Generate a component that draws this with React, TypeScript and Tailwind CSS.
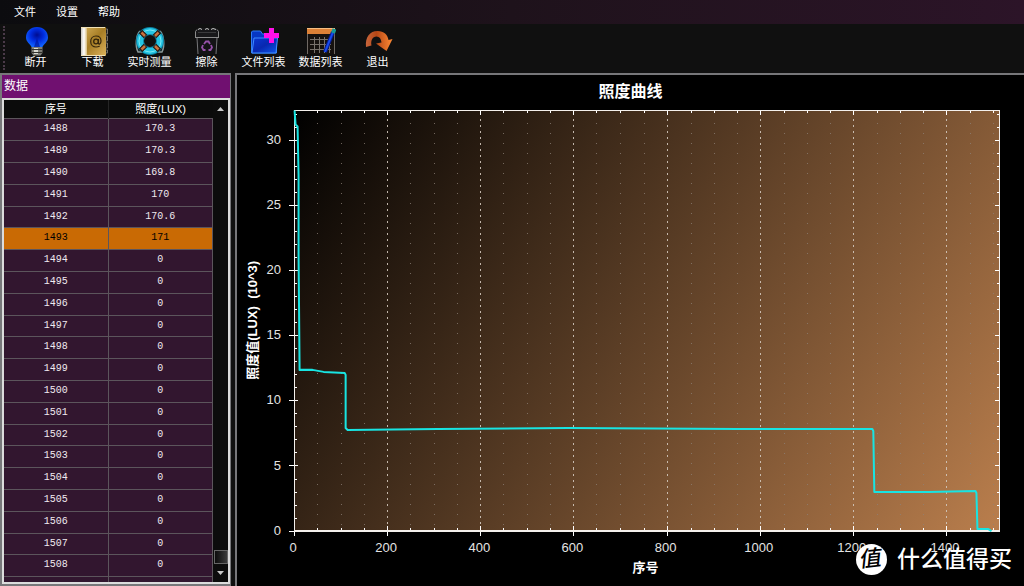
import React from 'react';

const menus = ['文件', '设置', '帮助'];

const rows: [number, string][] = [
  [1488, '170.3'],
  [1489, '170.3'],
  [1490, '169.8'],
  [1491, '170'],
  [1492, '170.6'],
  [1493, '171'],
  ...Array.from({ length: 15 }, (_, i): [number, string] => [1494 + i, '0']),
];

function BulbIcon() {
  return (
    <svg width="30" height="30" viewBox="0 0 30 30" aria-hidden="true">
      <defs>
        <radialGradient id="bulb" cx="0.5" cy="0.4" r="0.6">
          <stop offset="0" stopColor="#000c90" />
          <stop offset="0.5" stopColor="#002ce0" />
          <stop offset="1" stopColor="#1266ff" />
        </radialGradient>
      </defs>
      <path d="M16 1C9.500 1 5 5.500 5 11.500c0 4.500 4 6 5.500 9.500h11c1.500-3.500 5.500-5 5.500-9.500C27 5.500 22.500 1 16 1z" fill="url(#bulb)" />
      <path d="M16 12l-3 9h6z" fill="#0018a0" opacity="0.7" />
      <path d="M10.500 21h11v6l-2 2.500h-7l-2-2.500z" fill="#7d7d76" />
      <path d="M13 22h4v6h-4z" fill="#d9d9d0" />
      <path d="M10.500 23.500h11M10.500 26.500h11" stroke="#33332e" />
    </svg>
  );
}

function BookIcon() {
  return (
    <svg width="30" height="30" viewBox="0 0 30 30" aria-hidden="true">
      <defs>
        <linearGradient id="cover" x1="0" x2="1" y1="0" y2="1">
          <stop offset="0" stopColor="#d7b25c" />
          <stop offset="0.5" stopColor="#a67d25" />
          <stop offset="1" stopColor="#dfb55e" />
        </linearGradient>
        <linearGradient id="spine">
          <stop offset="0" stopColor="#c9c5bb" />
          <stop offset="0.5" stopColor="#ffffff" />
          <stop offset="1" stopColor="#d8bd7e" />
        </linearGradient>
      </defs>
      <path d="M28 3h1.500v5H28M28 10h1.500v5H28M28 17h1.500v5H28M28 24h1.500v3H28" fill="#222" stroke="#77736a" />
      <rect x="3" y="1" width="25" height="29" rx="1" fill="url(#cover)" />
      <path d="M3 1h6v29H3z" fill="url(#spine)" />
      <path d="M3 1.500h24M3 29.500h24" stroke="#f1e1b5" />
      <circle cx="18" cy="15.500" r="2.300" fill="none" stroke="#35260c" strokeWidth="1.300" />
      <path d="M20.500 13v4c0 2 2.500 1 2.500-2 0-3.500-2.500-5-5-5-3.200 0-5.300 2.500-5.300 5.500 0 3.500 2.500 5.500 5.300 5.500 1.500 0 2.700-.4 3.700-1" fill="none" stroke="#35260c" strokeWidth="1.200" />
    </svg>
  );
}

function LifebuoyIcon() {
  return (
    <svg width="32" height="30" viewBox="0 0 32 30" aria-hidden="true">
      <path d="M6 5C2 9 1 20 4 26h4M26 5c4 4 5 15 2 21h-4" fill="none" stroke="#8a9a9a" strokeWidth="1.500" />
      <circle cx="16" cy="15" r="10" fill="none" stroke="#0b7fa0" strokeWidth="8" />
      <circle cx="16" cy="15" r="10" fill="none" stroke="#25c5e3" strokeWidth="6" />
      <circle cx="16" cy="15" r="11" fill="none" stroke="#7ae8f4" strokeWidth="1" />
      <g stroke="#2a1a12" strokeWidth="5">
        <path d="M6.500 5.500l5 5M20.500 19.500l5 5M25.500 5.500l-5 5M11.500 19.500l-5 5" />
      </g>
      <g stroke="#c8703c" strokeWidth="2.500">
        <path d="M7.500 6.500l3.500 3.500M21 20l3.500 3.500M24.500 6.500L21 10M11 20l-3.500 3.500" />
      </g>
    </svg>
  );
}

function TrashIcon() {
  return (
    <svg width="28" height="30" viewBox="0 0 28 30" aria-hidden="true">
      <path d="M4 12h20l-1 16H5z" fill="#131315" />
      <path d="M4 12l1 16M24 12l-1 16" stroke="#77777a" strokeWidth="1" />
      <path d="M2 11V5l3-3h18l3 3v6z" fill="#18181a" />
      <path d="M2 11.500h24M2.500 11V5.500L4 3.500M25.500 11V5.500L24 3.500" fill="none" stroke="#8b8b8b" />
      <path d="M5 3.500l2-1 2 1M12 3.500l2-1 2 1M18 3.500l2-1 3 1" fill="none" stroke="#c4c4c4" />
      <path d="M5 6.500h18" stroke="#3a3a3c" />
      <g fill="none" stroke="#9551a8" strokeWidth="1.800">
        <path d="M11 18l2-2.500h2.500L17 18M18 19l1 2.500-1.500 2.500h-2M12.500 24h-2L9 21.500 10 19" />
      </g>
    </svg>
  );
}

function FolderIcon() {
  return (
    <svg width="30" height="30" viewBox="0 0 30 30" aria-hidden="true">
      <defs>
        <linearGradient id="folder" x1="0" x2="1" y1="0" y2="1">
          <stop offset="0" stopColor="#0a38d4" />
          <stop offset="0.5" stopColor="#0828b0" />
          <stop offset="1" stopColor="#0d57ec" />
        </linearGradient>
      </defs>
      <path d="M2.500 6l1-1h8l2 3h14v19h-25z" fill="#0737c4" stroke="#2f7df5" />
      <path d="M5 12h23.500L27 27H3z" fill="url(#folder)" stroke="#3f8cff" />
      <path d="M20 2h5v5h5v5h-5v5h-5v-5h-5V7h5z" fill="#ff10e8" />
    </svg>
  );
}

function SheetIcon() {
  return (
    <svg width="30" height="30" viewBox="0 0 30 30" aria-hidden="true">
      <path d="M1 2h28v26H1z" fill="#16120f" />
      <path d="M1.500 2v26M28.500 2v26" stroke="#6f6964" />
      <path d="M1 2h28v6H1z" fill="#dc8137" />
      <path d="M1 2.500h28" stroke="#f6bd82" />
      <path d="M4 13.500h21M4 18.500h21M4 23.500h21M8.500 11v16M13.500 11v16M18.500 11v16M23.500 11v16" stroke="#77716b" />
      <path d="M27 6l-8 20" stroke="#071c91" strokeWidth="4" />
      <path d="M27 6l-8 20" stroke="#174df0" strokeWidth="2" />
      <path d="M28.500 3l-1.500 4" stroke="#169996" strokeWidth="4" />
    </svg>
  );
}

function ExitIcon() {
  return (
    <svg width="30" height="30" viewBox="0 0 30 30" aria-hidden="true">
      <defs>
        <linearGradient id="exit">
          <stop offset="0" stopColor="#c8663c" />
          <stop offset="0.4" stopColor="#b64716" />
          <stop offset="1" stopColor="#ff8b35" />
        </linearGradient>
      </defs>
      <path d="M3 21C2 11 7 5 14.500 5c6.500 0 10 3.500 11 9l4-1-6 12-10.500-7.500 5.500-1c-.5-4-2-6-5-6-4 0-6 4-5 9z" fill="url(#exit)" />
    </svg>
  );
}

const tools = [
  { label: '断开', icon: <BulbIcon /> },
  { label: '下载', icon: <BookIcon /> },
  { label: '实时测量', icon: <LifebuoyIcon /> },
  { label: '擦除', icon: <TrashIcon /> },
  { label: '文件列表', icon: <FolderIcon /> },
  { label: '数据列表', icon: <SheetIcon /> },
  { label: '退出', icon: <ExitIcon /> },
];

const LEFT = 57;
const TOP = 35;
const RIGHT = 762;
const BOTTOM = 455;
const X_MAX = 1515;
const xAt = (v: number) => Math.round(LEFT + v * 0.4653);
const yAt = (v: number) => Math.round(BOTTOM - v * 13);

const curve: [number, number][] = [
  [57, 35], [58, 49], [60, 51], [61, 100], [61, 180], [62, 294], [75, 294], [86, 296], [107, 297],
  [108, 299], [108, 352], [110, 354], [200, 353], [330, 352], [500, 353], [634, 353], [635, 355],
  [636, 416], [690, 416], [737, 415], [738, 417], [739, 453], [750, 453], [753, 455],
];

function Chart() {
  const xs = Array.from({ length: Math.floor(X_MAX / 50) }, (_, i) => (i + 1) * 50);
  const ys = Array.from({ length: 32 }, (_, i) => i + 1);
  return (
    <svg
      viewBox="0 0 786 509"
      preserveAspectRatio="xMinYMin meet"
      className="block h-full w-full"
      role="img"
      aria-label="照度曲线"
      fontFamily="'Liberation Sans', 'Noto Sans CJK SC', sans-serif"
    >
      <defs>
        <linearGradient id="plot" gradientUnits="userSpaceOnUse" x1="57" y1="35" x2="728" y2="490">
          <stop offset="0" stopColor="#000000" />
          <stop offset="1" stopColor="#b87d4c" />
        </linearGradient>
      </defs>
      <rect x={LEFT} y={TOP} width={RIGHT - LEFT} height={BOTTOM - TOP} fill="url(#plot)" />
      <g shapeRendering="crispEdges" strokeWidth="1">
        {xs.map((v) => {
          const major = v % 200 === 0;
          const x = xAt(v) + 0.5;
          return (
            <g key={v}>
              <path
                d={`M${x} ${major ? TOP + 9 : TOP + 13}V${BOTTOM}`}
                stroke={major ? '#d2c7bb' : '#8d8278'}
                strokeOpacity={major ? 0.9 : 0.75}
                strokeDasharray={major ? '2 4' : '1 9'}
              />
              <path
                d={`M${x} ${TOP}v${major ? 5 : 3}M${x} ${BOTTOM + (major ? 5 : 0)}v${major ? -10 : -3}`}
                stroke="#ffffff"
              />
            </g>
          );
        })}
        {ys.map((v) => {
          const major = v % 5 === 0;
          const y = yAt(v) + 0.5;
          return (
            <path
              key={v}
              d={`M${LEFT - (major ? 5 : 0)} ${y}h${major ? 9 : 3}M${RIGHT} ${y}h${major ? -5 : -3}`}
              stroke="#ffffff"
            />
          );
        })}
        <path d={`M${LEFT - 5} ${BOTTOM + 0.5}h5M${LEFT + 0.5} ${BOTTOM}v5`} stroke="#ffffff" />
      </g>
      <g fill="none" stroke="#f4f0ec" shapeRendering="crispEdges">
        <path d={`M${LEFT + 0.5} ${BOTTOM}V${TOP + 0.5}H${RIGHT}`} />
        <path d={`M${RIGHT - 0.5} ${TOP}V${BOTTOM}`} />
        <path d={`M${LEFT} ${BOTTOM}H${RIGHT}`} strokeWidth="2" />
      </g>
      <path
        d={'M' + curve.map(([x, y]) => `${x + 0.5} ${y + 0.5}`).join('L')}
        fill="none"
        stroke="#18e4e2"
        strokeWidth="2"
        strokeLinejoin="round"
      />
      <g fill="#e4e4e4" fontSize="13">
        {[0, 5, 10, 15, 20, 25, 30].map((v) => (
          <text key={v} x="44" y={yAt(v) + 4} textAnchor="end">{v}</text>
        ))}
        {[0, 200, 400, 600, 800, 1000, 1200, 1400].map((v) => (
          <text key={v} x={xAt(v) - 1} y="476" textAnchor="middle">{v}</text>
        ))}
      </g>
      <g fill="#ffffff" textAnchor="middle" fontWeight="700">
        <text x="393" y="22" fontSize="16">照度曲线</text>
        <text x="408" y="496" fontSize="13">序号</text>
        <text transform="translate(20 245) rotate(-90)" fontSize="13">
          照度值(LUX)&#160;&#160;(10^3)
        </text>
      </g>
    </svg>
  );
}

function Watermark() {
  return (
    <div className="absolute right-3 bottom-[11px] flex items-center gap-[10px] text-white">
      <span className="flex size-[31px] items-center justify-center rounded-full bg-white text-[22px] leading-none font-medium text-black">
        <span className="-skew-x-6 -skew-y-6">值</span>
      </span>
      <span className="text-[23px] leading-8 font-medium">什么值得买</span>
    </div>
  );
}

export default function App() {
  return (
    <div className="flex h-screen flex-col overflow-hidden bg-[#101010] font-['Liberation_Sans','Noto_Sans_CJK_SC',sans-serif] text-white">
      <nav className="flex h-6 shrink-0 items-center gap-5 bg-linear-to-r from-[#0c0c0f] via-[#1e121b] to-[#2c1428] px-3.5 text-[11px]">
        {menus.map((m) => (
          <button key={m} type="button" className="leading-6">{m}</button>
        ))}
      </nav>
      <div className="flex h-[49px] shrink-0 items-start bg-[#101010] pt-0.5">
        <div className="ml-[3px] h-11 border-l-2 border-dotted border-[#4a3a48]" />
        <div className="ml-0.5 flex">
          {tools.map((t) => (
            <button key={t.label} type="button" className="flex w-[57px] flex-col items-center text-[11px] leading-3 whitespace-nowrap">
              {t.icon}
              <span>{t.label}</span>
            </button>
          ))}
        </div>
      </div>
      <main className="flex min-h-0 flex-1 gap-1">
        <section className="flex w-[231px] shrink-0 flex-col border-2 border-r border-[#77777a]">
          <h2 className="h-[23px] shrink-0 bg-[#701070] px-0.5 text-xs leading-[22px]">数据</h2>
          <div className="flex min-h-0 flex-1 border-2 border-[#dcdcdc] bg-black">
            <div className="min-w-0 flex-1 overflow-hidden">
              <table className="w-full table-fixed border-collapse text-center font-['Liberation_Mono','Noto_Sans_CJK_SC',monospace] text-[10px]">
                <thead>
                  <tr className="h-[18px] bg-[#0b0b0b] font-['Liberation_Sans','Noto_Sans_CJK_SC',sans-serif] text-[11px]">
                    <th className="border-r border-[#252525] p-0 leading-4 font-normal">序号</th>
                    <th className="p-0 leading-4 font-normal">照度(LUX)</th>
                  </tr>
                </thead>
                <tbody>
                  {rows.map(([n, v]) => (
                    <tr
                      key={n}
                      className={
                        n === 1493
                          ? 'h-[22px] bg-[#c96a04] text-black nth-[5n]:h-[21px]'
                          : 'h-[22px] bg-[#32162f] text-[#f0eaf0] nth-[5n]:h-[21px]'
                      }
                    >
                      <td className="border border-l-0 border-[#5c555c] p-0 leading-4">{n}</td>
                      <td className="border border-[#5c555c] p-0 leading-4">{v}</td>
                    </tr>
                  ))}
                  <tr className="h-[22px] bg-[#32162f]" aria-hidden="true">
                    <td className="border border-l-0 border-[#5c555c] p-0" />
                    <td className="border border-[#5c555c] p-0" />
                  </tr>
                </tbody>
              </table>
            </div>
            <div className="flex w-[15px] shrink-0 flex-col items-center bg-[#0c0c0c]">
              <button type="button" aria-label="向上" className="flex h-[18px] w-full items-center justify-center">
                <svg width="7" height="4" viewBox="0 0 7 4"><path d="M0 4l3.500-4L7 4z" fill="#c8c8c8" /></svg>
              </button>
              <div className="flex-1" />
              <div className="h-[14px] w-3.5 border border-[#666] bg-linear-to-r from-[#0c0c0c] to-[#3c3c3c]" />
              <button type="button" aria-label="向下" className="flex h-[18px] w-full items-center justify-center">
                <svg width="7" height="4" viewBox="0 0 7 4"><path d="M0 0l3.500 4L7 0z" fill="#c8c8c8" /></svg>
              </button>
            </div>
          </div>
        </section>
        <section className="relative min-w-0 flex-1 border-t-2 border-l-2 border-[#77777a] bg-black">
          <Chart />
          <Watermark />
        </section>
      </main>
    </div>
  );
}
